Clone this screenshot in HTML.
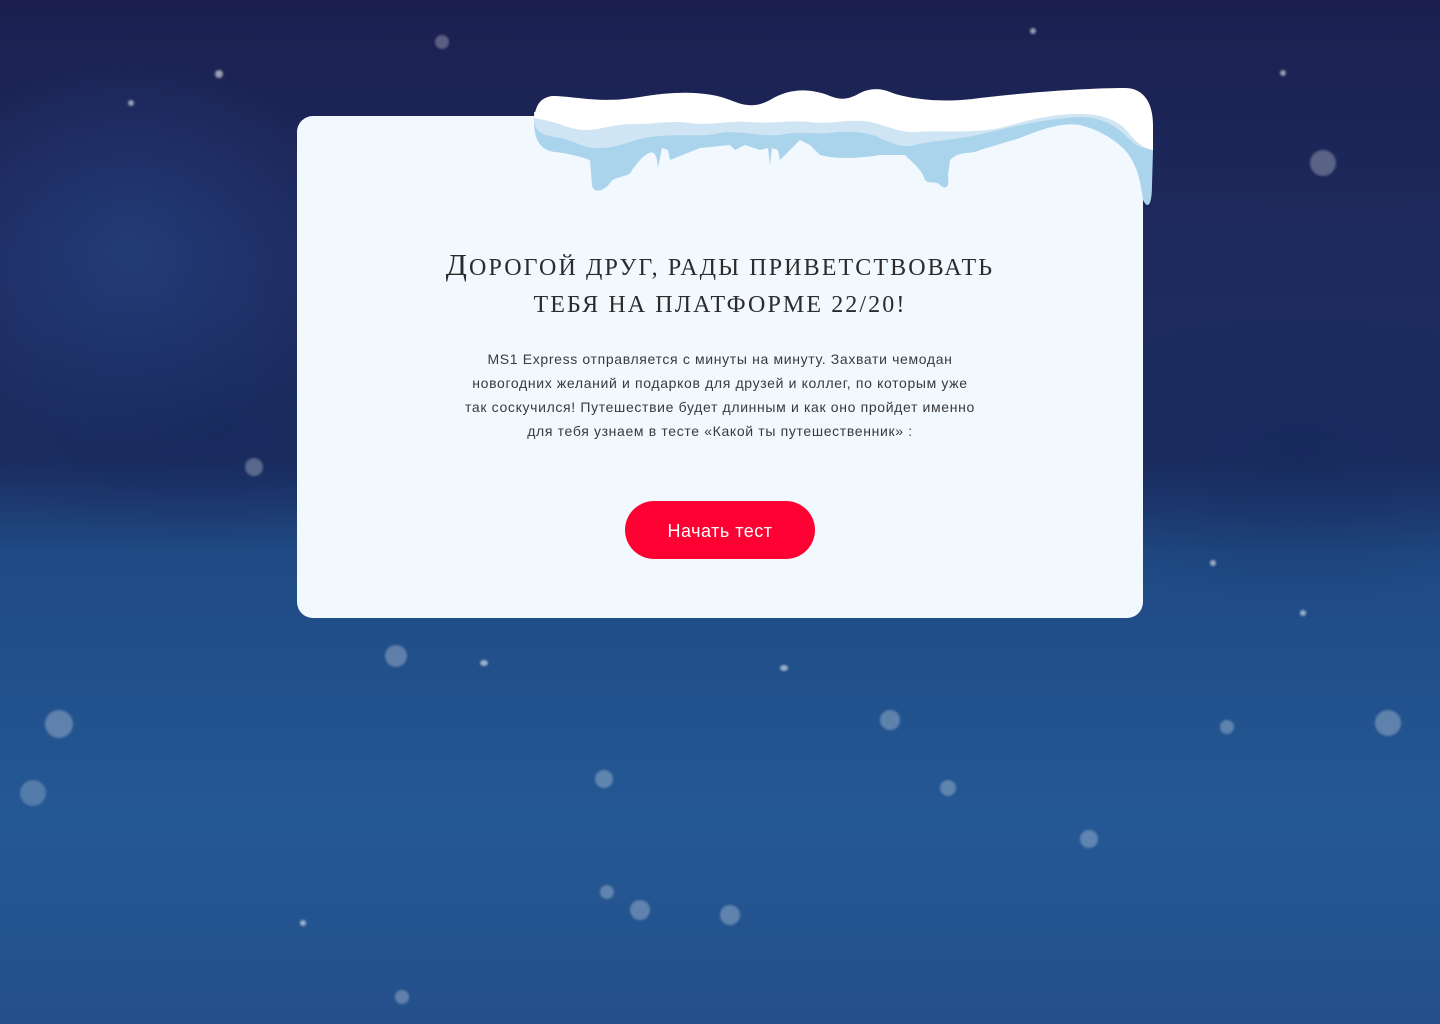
<!DOCTYPE html>
<html><head><meta charset="utf-8"><style>
html,body{margin:0;padding:0;width:1440px;height:1024px;overflow:hidden}
body{position:relative;background:linear-gradient(180deg,#1b2050 0%,#1e2a5e 25%,#1c2d60 45%,#1f4a84 54%,#245894 80%,#24508a 100%);font-family:"Liberation Sans",sans-serif}
.bg{position:absolute;inset:0;background:
radial-gradient(ellipse 220px 200px at 130px 250px,rgba(40,80,150,.45),transparent),
radial-gradient(ellipse 300px 160px at 1300px 450px,rgba(20,40,90,.5),transparent),
radial-gradient(ellipse 260px 120px at 200px 420px,rgba(20,40,90,.5),transparent)}
.s{position:absolute;border-radius:50%;background:rgba(255,255,255,.55);filter:blur(1px)}
.card{position:absolute;left:297px;top:116px;width:846px;height:502px;background:#f1f8fe;border-radius:16px}
h1{position:absolute;left:297px;top:246px;width:846px;margin:0;text-align:center;font-family:"Liberation Serif","DejaVu Serif",serif;font-weight:normal;text-transform:uppercase;font-size:24px;line-height:37px;color:#2b2b2b;letter-spacing:2.1px}
h1 .b{font-size:31px}
p{position:absolute;left:400px;top:347px;width:640px;margin:0;text-align:center;font-size:14px;line-height:24px;color:#3a3a3a;letter-spacing:.65px;white-space:nowrap}
.btn{position:absolute;left:625px;top:501px;width:190px;height:58px;border-radius:29px;background:#ff0033;color:#fff;font-size:18px;line-height:60px;text-align:center;letter-spacing:.5px}
svg{position:absolute;left:0;top:0}
</style></head><body>
<div class="bg"></div>
<div class="s" style="left:215px;top:70px;width:8px;height:8px"></div>
<div class="s" style="left:1310px;top:150px;width:26px;height:26px;opacity:.5"></div>
<div class="s" style="left:45px;top:710px;width:28px;height:28px;opacity:.5"></div>
<div class="s" style="left:1375px;top:710px;width:26px;height:26px;opacity:.5"></div>
<div class="s" style="left:880px;top:710px;width:20px;height:20px;opacity:.5"></div>
<div class="s" style="left:595px;top:770px;width:18px;height:18px;opacity:.5"></div>
<div class="s" style="left:245px;top:458px;width:18px;height:18px;opacity:.5"></div>
<div class="s" style="left:385px;top:645px;width:22px;height:22px;opacity:.5"></div>
<div class="s" style="left:20px;top:780px;width:26px;height:26px;opacity:.4"></div>
<div class="s" style="left:630px;top:900px;width:20px;height:20px;opacity:.5"></div>
<div class="s" style="left:720px;top:905px;width:20px;height:20px;opacity:.5"></div>
<div class="s" style="left:1080px;top:830px;width:18px;height:18px;opacity:.5"></div>
<div class="s" style="left:435px;top:35px;width:14px;height:14px;opacity:.5"></div>
<div class="s" style="left:940px;top:780px;width:16px;height:16px;opacity:.5"></div>
<div class="s" style="left:1220px;top:720px;width:14px;height:14px;opacity:.5"></div>
<div class="s" style="left:300px;top:920px;width:6px;height:6px"></div>
<div class="s" style="left:1300px;top:610px;width:6px;height:6px"></div>
<div class="s" style="left:480px;top:660px;width:8px;height:6px"></div>
<div class="s" style="left:780px;top:665px;width:8px;height:6px"></div>
<div class="s" style="left:128px;top:100px;width:6px;height:6px"></div>
<div class="s" style="left:1030px;top:28px;width:6px;height:6px"></div>
<div class="s" style="left:1280px;top:70px;width:6px;height:6px"></div>
<div class="s" style="left:1210px;top:560px;width:6px;height:6px"></div>
<div class="s" style="left:600px;top:885px;width:14px;height:14px;opacity:.5"></div>
<div class="s" style="left:395px;top:990px;width:14px;height:14px;opacity:.5"></div>
<div class="card"></div>
<svg width="1440" height="1024" viewBox="0 0 1440 1024">
<path fill="#a9d4ec" d="M534 120 C534 140 540 150 555 152 C565 153 575 155 590 160 L592 185 C594 195 605 190 610 183 C615 175 630 178 632 170 L640 160 C650 150 655 150 657 160 L658 168 L662 148 L668 150 L670 160 L700 148 L730 145 L735 150 L745 145 L760 150 L768 148 L770 165 L772 148 L778 150 L780 160 L790 150 L800 140 L810 145 L820 155 C840 160 860 158 880 155 L905 155 C915 165 922 170 925 180 C930 185 935 180 940 185 C945 190 950 188 948 175 L950 160 C960 150 970 155 980 150 L1020 138 C1040 130 1060 122 1080 125 C1100 130 1115 140 1125 150 C1135 162 1140 175 1143 200 C1148 210 1152 205 1152 185 L1153 150 L1145 112 L534 112 Z"/>
<path fill="#cfe5f3" d="M534 118 C534 130 540 135 555 137 C575 140 585 150 600 148 C620 148 630 140 650 137 C680 133 700 138 720 133 C740 130 760 137 780 135 C800 130 815 135 830 133 C850 130 870 133 880 138 C895 145 905 148 915 145 C935 140 960 140 990 132 C1020 125 1050 118 1080 117 C1100 117 1115 125 1125 135 C1135 145 1140 148 1153 150 L1145 112 L534 112 Z"/>
<path fill="#ffffff" d="M534 118 C536 105 540 98 552 96 C575 96 600 104 640 97 C680 90 710 92 730 100 C745 106 755 108 770 100 C790 88 810 88 830 96 C840 100 848 100 860 93 C870 88 880 88 890 92 C905 98 940 104 980 98 C1030 92 1090 88 1125 88 C1145 88 1153 105 1153 125 L1153 150 C1145 148 1138 145 1128 132 C1120 122 1105 115 1085 114 C1060 113 1035 118 1000 128 C970 134 940 130 915 132 C900 133 885 125 870 122 C850 118 830 125 810 122 C790 120 770 124 750 122 C730 120 710 126 690 123 C670 120 650 125 630 124 C610 125 600 130 585 130 C570 130 560 122 534 118 Z"/>
</svg>
<h1><span class="b">Д</span>орогой друг, рады приветствовать<br>тебя на платформе 22/20!</h1>
<p>MS1 Express отправляется с минуты на минуту. Захвати чемодан<br>новогодних желаний и подарков для друзей и коллег, по которым уже<br>так соскучился! Путешествие будет длинным и как оно пройдет именно<br>для тебя узнаем в тесте «Какой ты путешественник» :</p>
<div class="btn">Начать тест</div>
</body></html>
